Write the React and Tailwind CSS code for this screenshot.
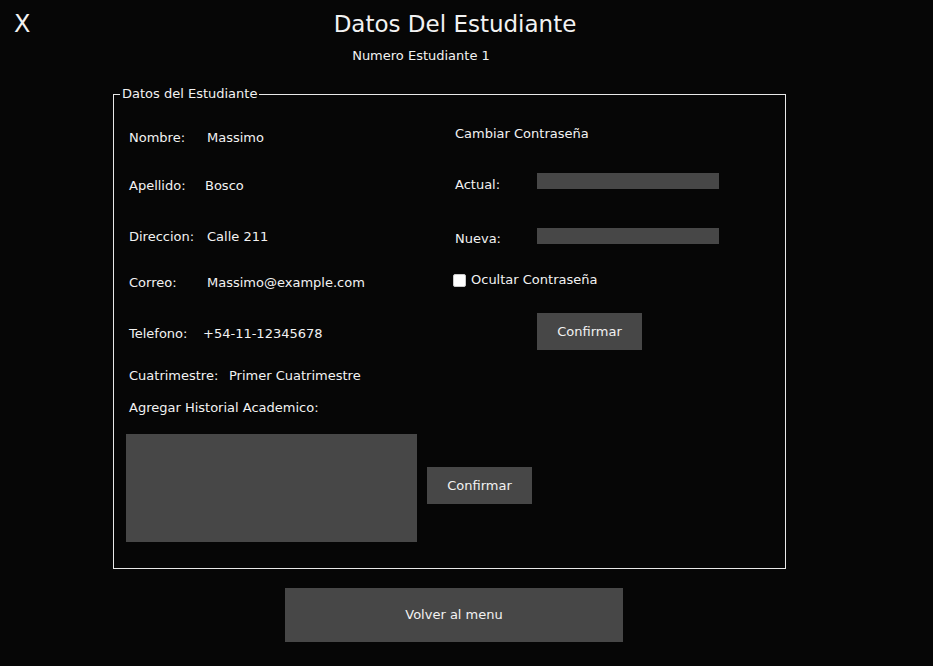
import React from 'react';

const font = { fontFamily: '"DejaVu Sans", "Liberation Sans", sans-serif' };

// Left column rows: label, value, label width (to line the value up), top margin
const datos = [
  { label: 'Nombre:', value: 'Massimo', w: 'w-[78px]', mt: 'mt-[28px]' },
  { label: 'Apellido:', value: 'Bosco', w: 'w-[76px]', mt: 'mt-[32px]' },
  { label: 'Direccion:', value: 'Calle 211', w: 'w-[78px]', mt: 'mt-[35px]' },
  { label: 'Correo:', value: 'Massimo@example.com', w: 'w-[78px]', mt: 'mt-[30px]' },
  { label: 'Telefono:', value: '+54-11-12345678', w: 'w-[74px]', mt: 'mt-[35px]' },
  { label: 'Cuatrimestre:', value: 'Primer Cuatrimestre', w: 'w-[100px]', mt: 'mt-[26px]' },
];

const DataRow = ({ label, value, w, mt }) => (
  <div className={`${mt} flex h-4 items-center whitespace-nowrap`}>
    <span className={`${w} shrink-0`}>{label}</span>
    <span>{value}</span>
  </div>
);

const GrayButton = ({ children, className = '' }) => (
  <button className={`flex h-[37px] w-[105px] items-center justify-center bg-[#474747] text-[13px] text-[#f2f2f2] ${className}`}>
    {children}
  </button>
);

export default function App() {
  return (
    <div className="h-[666px] w-[933px] overflow-hidden bg-[#060606] text-[13px] leading-4 text-[#f2f2f2]" style={font}>
      {/* Header */}
      <div className="flex h-[48px] items-start pt-[10px]">
        <span className="ml-[14px] w-[30px] text-[24px] leading-7">X</span>
        <h1 className="w-[822px] text-center text-[23px] leading-7">Datos Del Estudiante</h1>
      </div>
      <p className="ml-[221px] w-[400px] text-center leading-4">Numero Estudiante 1</p>

      {/* Group box */}
      <fieldset className="ml-[113px] mt-[22px] h-[483px] w-[673px] border border-[#e8e8e8]">
        <legend className="ml-[6px] px-[2px] leading-4">Datos del Estudiante</legend>

        <div className="flex">
          {/* Left column */}
          <div className="w-[341px] shrink-0 pl-[15px]">
            {datos.map((d) => (
              <DataRow key={d.label} {...d} />
            ))}
            <div className="mt-[16px] h-4 whitespace-nowrap">Agregar Historial Academico:</div>
          </div>

          {/* Right column: password change */}
          <div className="flex-1">
            <div className="mt-[24px] h-4 whitespace-nowrap">Cambiar Contraseña</div>
            <div className="mt-[31px] flex items-start">
              <span className="mt-[4px] w-[82px]">Actual:</span>
              <div className="h-4 w-[182px] bg-[#474747]" />
            </div>
            <div className="mt-[35px] flex items-start">
              <span className="mt-[3px] w-[82px]">Nueva:</span>
              <div className="h-4 w-[182px] bg-[#474747]" />
            </div>
            <label className="-ml-[2px] mt-[25px] flex h-4 items-center gap-[5px] whitespace-nowrap">
              <input type="checkbox" className="h-[13px] w-[13px] appearance-none rounded-[2px] border border-[#c8c8c8] bg-white" />
              <span>Ocultar Contraseña</span>
            </label>
            <GrayButton className="ml-[82px] mt-[25px]">Confirmar</GrayButton>
          </div>
        </div>

        {/* Historial + confirm */}
        <div className="ml-[12px] mt-[18px] flex items-start gap-[10px]">
          <div className="h-[108px] w-[291px] bg-[#474747]" />
          <GrayButton className="mt-[33px]">Confirmar</GrayButton>
        </div>
      </fieldset>

      <button className="ml-[285px] mt-[19px] flex h-[54px] w-[338px] items-center justify-center bg-[#474747] text-[13px] text-[#f2f2f2]">
        Volver al menu
      </button>
    </div>
  );
}
